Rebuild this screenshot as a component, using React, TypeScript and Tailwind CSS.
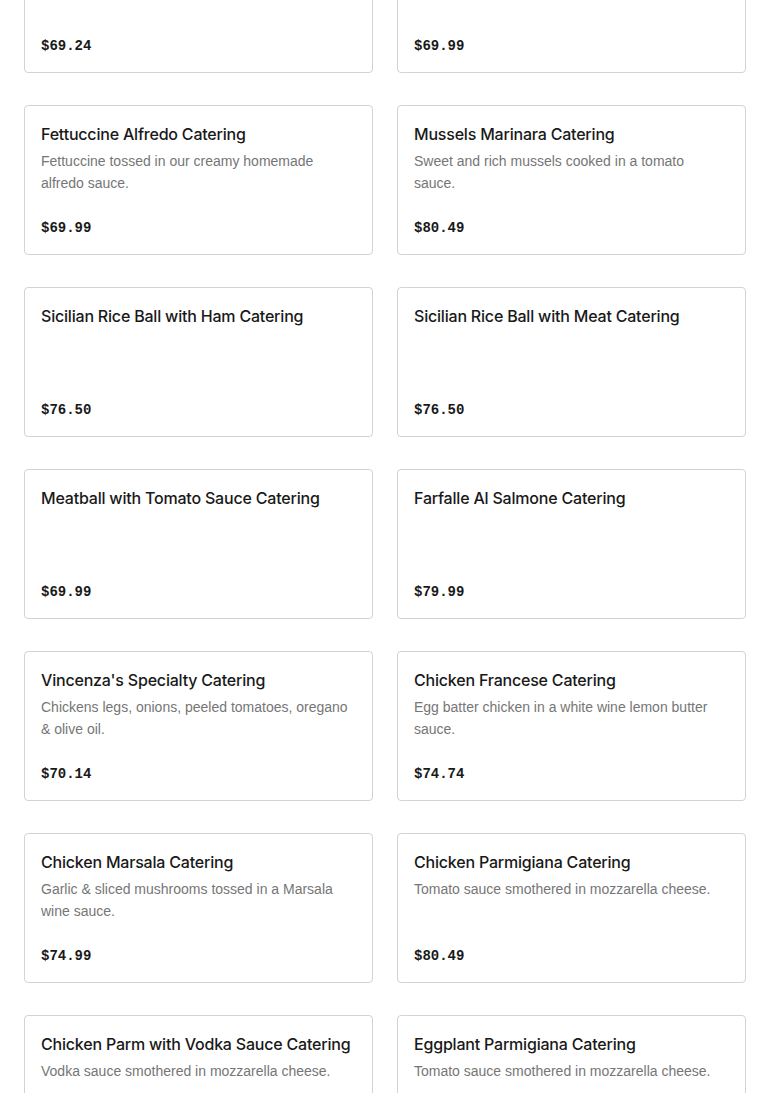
type Item = {
  title: string;
  description?: string;
  price: string;
};

const items: Item[] = [
  { title: "Baked Ziti Catering", price: "$69.24" },
  { title: "Penne alla Vodka Catering", price: "$69.99" },
  {
    title: "Fettuccine Alfredo Catering",
    description: "Fettuccine tossed in our creamy homemade alfredo sauce.",
    price: "$69.99",
  },
  {
    title: "Mussels Marinara Catering",
    description: "Sweet and rich mussels cooked in a tomato sauce.",
    price: "$80.49",
  },
  { title: "Sicilian Rice Ball with Ham Catering", price: "$76.50" },
  { title: "Sicilian Rice Ball with Meat Catering", price: "$76.50" },
  { title: "Meatball with Tomato Sauce Catering", price: "$69.99" },
  { title: "Farfalle Al Salmone Catering", price: "$79.99" },
  {
    title: "Vincenza's Specialty Catering",
    description: "Chickens legs, onions, peeled tomatoes, oregano & olive oil.",
    price: "$70.14",
  },
  {
    title: "Chicken Francese Catering",
    description: "Egg batter chicken in a white wine lemon butter sauce.",
    price: "$74.74",
  },
  {
    title: "Chicken Marsala Catering",
    description: "Garlic & sliced mushrooms tossed in a Marsala wine sauce.",
    price: "$74.99",
  },
  {
    title: "Chicken Parmigiana Catering",
    description: "Tomato sauce smothered in mozzarella cheese.",
    price: "$80.49",
  },
  {
    title: "Chicken Parm with Vodka Sauce Catering",
    description: "Vodka sauce smothered in mozzarella cheese.",
    price: "$80.49",
  },
  {
    title: "Eggplant Parmigiana Catering",
    description: "Tomato sauce smothered in mozzarella cheese.",
    price: "$69.99",
  },
];

const MenuCard = ({ item }: { item: Item }) => (
  <div className="flex h-[150px] flex-col justify-between rounded-[4px] border border-[#d3d3d3] bg-white px-4 pt-4 pb-4">
    <div>
      <h3 className="text-[16px] leading-6 font-medium tracking-[-0.2px] text-[#191919] [font-family:Inter,sans-serif]">
        {item.title}
      </h3>
      {item.description && (
        <p className="mt-1 text-[14px] leading-[22px] text-[#767676] [font-family:'Liberation_Sans',sans-serif]">
          {item.description}
        </p>
      )}
    </div>
    <div className="text-[14px] leading-5 font-bold text-[#191919] [font-family:'Liberation_Mono',monospace]">
      {item.price}
    </div>
  </div>
);

export default function App() {
  return (
    <div className="h-[1093px] overflow-hidden bg-white">
      <div className="mt-[-77px] grid grid-cols-2 gap-x-6 gap-y-8 px-6">
        {items.map((item) => (
          <MenuCard key={item.title + item.price} item={item} />
        ))}
      </div>
    </div>
  );
}
